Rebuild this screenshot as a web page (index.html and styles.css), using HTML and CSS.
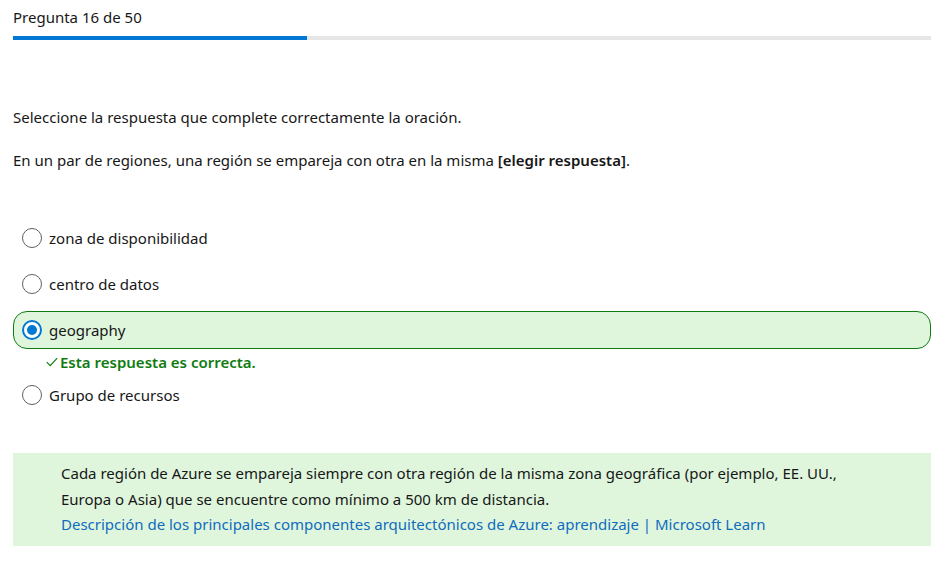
FILE: index.html
```html
<!DOCTYPE html>
<html lang="es">
<head>
<meta charset="utf-8">
<link rel="stylesheet" href="styles.css">
</head>
<body>
<div class="page">
  <div class="header">Pregunta 16 de 50</div>
  <div class="progress"><div class="progress-fill" style="width:32%"></div></div>

  <p class="instruction">Seleccione la respuesta que complete correctamente la oración.</p>
  <p class="question">En un par de regiones, una región se empareja con otra en la misma <b>[elegir respuesta]</b>.</p>

  <div class="options">
    <label class="option"><span class="radio"></span><span>zona de disponibilidad</span></label>
    <label class="option"><span class="radio"></span><span>centro de datos</span></label>
    <div class="correct-group">
      <label class="option selected"><span class="radio checked"></span><span>geography</span></label>
      <div class="feedback"><svg class="check" width="12" height="10" viewBox="0 0 12 10"><path d="M0.8 5.2 L4.2 8.6 L11.2 1.2" fill="none" stroke="#107c10" stroke-width="1.2"/></svg>Esta respuesta es correcta.</div>
    </div>
    <label class="option"><span class="radio"></span><span>Grupo de recursos</span></label>
  </div>

  <div class="explanation">
    <p>Cada región de Azure se empareja siempre con otra región de la misma zona geográfica (por ejemplo, EE. UU., Europa o Asia) que se encuentre como mínimo a 500 km de distancia.</p>
    <a href="#">Descripción de los principales componentes arquitectónicos de Azure: aprendizaje | Microsoft Learn</a>
  </div>
</div>
</body>
</html>
```
FILE: styles.css
```css
html, body {
  margin: 0;
  padding: 0;
  background: #fff;
}
body {
  font-family: "Noto Sans", "Open Sans", sans-serif;
  font-size: 15px;
  color: #171717;
}
.page {
  padding: 0 15px 0 13px;
}
.header {
  padding-top: 7px;
  height: 29px;
  line-height: 20px;
}
.progress {
  height: 4px;
  background: #e6e6e6;
}
.progress-fill {
  height: 100%;
  background: #0078d4;
}
.instruction {
  margin: 66px 0 0;
  line-height: 22px;
}
.question {
  margin: 21px 0 0;
  line-height: 22px;
}
.question b {
  font-weight: 600;
}
.options {
  margin-top: 48px;
  display: flex;
  flex-direction: column;
  gap: 8px;
}
.option {
  display: flex;
  align-items: center;
  gap: 7px;
  height: 38px;
  padding-left: 8px;
  box-sizing: border-box;
  border: 1px solid transparent;
  border-radius: 14px;
}
.option.selected {
  background: #dff6dd;
  border-color: #107c10;
}
.radio {
  width: 20px;
  height: 20px;
  box-sizing: border-box;
  border: 1px solid #616161;
  border-radius: 50%;
  flex: none;
  display: flex;
  align-items: center;
  justify-content: center;
  background: #fff;
}
.radio.checked {
  border: 2px solid #0078d4;
}
.radio.checked::after {
  content: "";
  width: 10px;
  height: 10px;
  border-radius: 50%;
  background: #0078d4;
}
.correct-group {
  display: flex;
  flex-direction: column;
  margin-bottom: -1px;
}
.feedback {
  display: flex;
  align-items: center;
  gap: 2px;
  padding-left: 33px;
  margin-top: 6px;
  height: 14px;
  color: #107c10;
  font-weight: 600;
}
.check {
  flex: none;
}
.explanation {
  margin-top: 39px;
  background: #dff6dd;
  padding: 8px 70px 8px 48px;
  line-height: 25.5px;
}
.explanation p {
  margin: 0;
}
.explanation a {
  color: #0f6cbd;
  text-decoration: none;
}
```
